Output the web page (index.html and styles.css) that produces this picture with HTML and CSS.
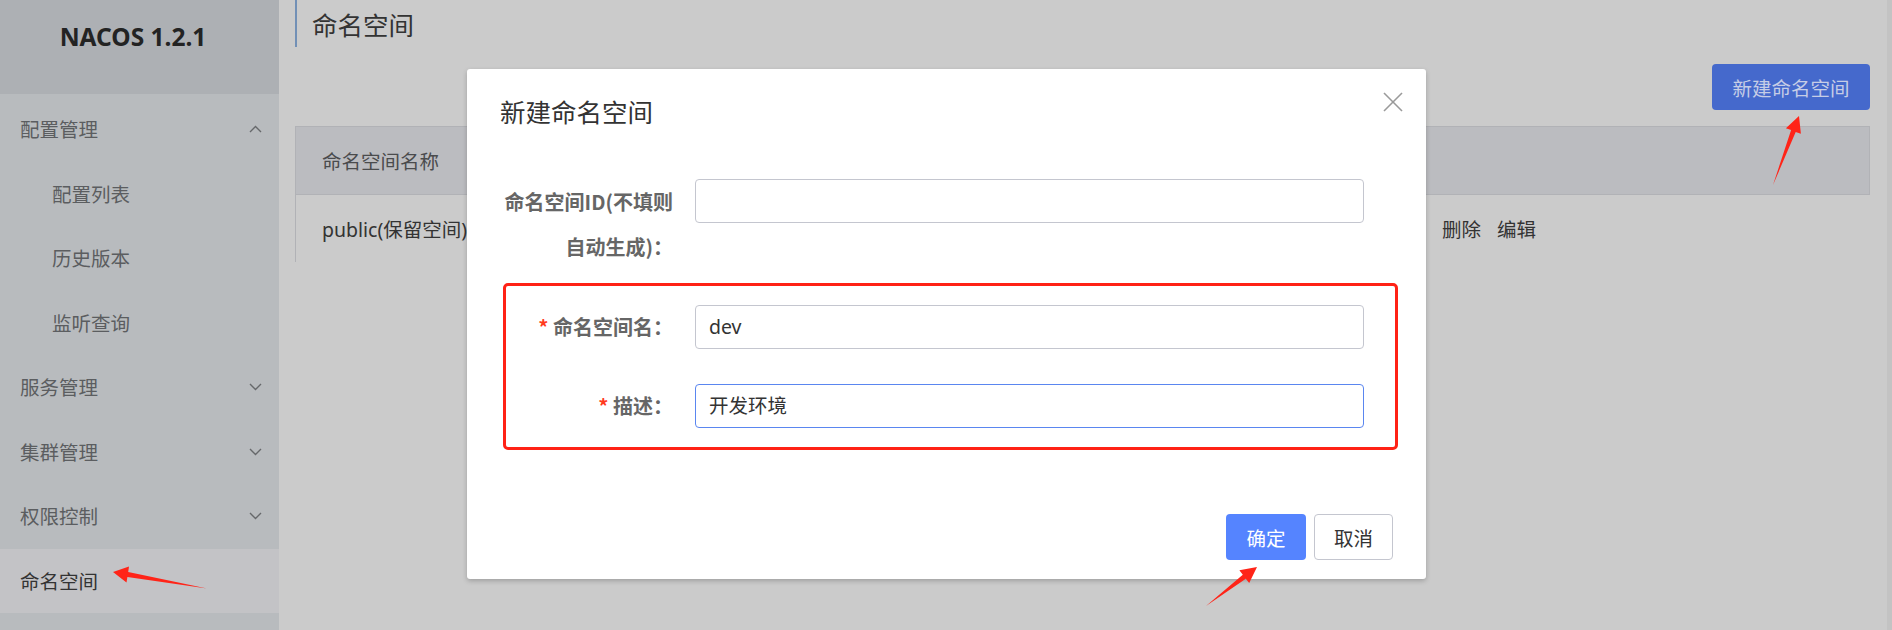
FILE: index.html
```html
<!DOCTYPE html>
<html lang="zh-CN">
<head>
<meta charset="utf-8">
<title>NACOS 1.2.1 - 命名空间</title>
<link rel="stylesheet" href="styles.css">
</head>
<body>
<div class="app">
  <aside class="sidebar">
    <div class="brand">NACOS 1.2.1</div>
    <nav class="menu">
      <div class="menu-item">配置管理<svg class="chev" width="13" height="8" viewBox="0 0 13 8"><polyline points="1,7 6.5,1.5 12,7"/></svg></div>
      <div class="menu-item sub">配置列表</div>
      <div class="menu-item sub">历史版本</div>
      <div class="menu-item sub">监听查询</div>
      <div class="menu-item">服务管理<svg class="chev" width="13" height="8" viewBox="0 0 13 8"><polyline points="1,1 6.5,6.5 12,1"/></svg></div>
      <div class="menu-item">集群管理<svg class="chev" width="13" height="8" viewBox="0 0 13 8"><polyline points="1,1 6.5,6.5 12,1"/></svg></div>
      <div class="menu-item">权限控制<svg class="chev" width="13" height="8" viewBox="0 0 13 8"><polyline points="1,1 6.5,6.5 12,1"/></svg></div>
      <div class="menu-item active">命名空间</div>
    </nav>
  </aside>
  <main class="main">
    <h1 class="page-title">命名空间</h1>
    <div class="toolbar"><button class="btn btn-new">新建命名空间</button></div>
    <div class="table">
      <div class="thead"><div class="cell">命名空间名称</div></div>
      <div class="trow">
        <div class="cell">public(保留空间)</div>
        <div class="cell actions"><span>删除</span><span>编辑</span></div>
      </div>
    </div>
  </main>
  <div class="scrollbar"></div>
</div>

<div class="dialog">
  <div class="dialog-header">
    <div class="dialog-title">新建命名空间</div>
    <svg class="dialog-close" width="20" height="20" viewBox="0 0 20 20"><line x1="1" y1="1" x2="19" y2="19"/><line x1="19" y1="1" x2="1" y2="19"/></svg>
  </div>
  <div class="form">
    <div class="form-item first">
      <label class="form-label two-line">命名空间ID(不填则<br>自动生成)：</label>
      <div class="input"></div>
    </div>
    <div class="form-item second">
      <label class="form-label"><span class="req">*</span> 命名空间名：</label>
      <div class="input">dev</div>
    </div>
    <div class="form-item third">
      <label class="form-label"><span class="req">*</span> 描述：</label>
      <div class="input focus">开发环境</div>
    </div>
  </div>
  <div class="dialog-footer">
    <button class="btn btn-primary">确定</button>
    <button class="btn btn-normal">取消</button>
  </div>
  <div class="highlight"></div>
</div>

<svg class="annotations" width="1892" height="630" viewBox="0 0 1892 630">
  <polygon points="113,572 129,566.6 128.2,572 207,588.5 127.4,577 126.5,582.4"/>
  <polygon points="1799,116 1800.9,133.8 1795.7,131.9 1773,185 1791.1,130.1 1785.9,128.2"/>
  <polygon points="1257,567 1249.2,583.1 1245.8,578.7 1206,606 1242.8,574.7 1239.4,570.3"/>
</svg>
</body>
</html>
```

FILE: styles.css
```css
* { box-sizing: border-box; }

html, body {
  margin: 0;
  padding: 0;
}

body {
  position: relative;
  width: 1892px;
  height: 630px;
  overflow: hidden;
  background: #cbcbcb;
  font-family: "Noto Sans", "Noto Sans CJK SC", sans-serif;
  font-size: 19.5px;
  color: #333;
}

.app {
  display: flex;
  height: 630px;
}

/* Sidebar */
.sidebar {
  width: 279px;
  flex: none;
  background: #b8bbbe;
  display: flex;
  flex-direction: column;
}

.brand {
  height: 94px;
  background: #adb0b4;
  padding: 21px 13px 0 0;
  text-align: center;
  font-family: "Noto Sans", sans-serif;
  font-weight: 700;
  font-size: 24.5px;
  line-height: 32px;
  color: #232323;
}

.menu {
  padding-top: 3px;
}

.menu-item {
  height: 64.5px;
  display: flex;
  align-items: center;
  justify-content: space-between;
  padding: 0 17px 0 20px;
  font-family: "Noto Sans CJK SC", sans-serif;
  font-size: 19.5px;
  line-height: 28px;
  color: #5b5d60;
}

.menu-item.sub {
  padding-left: 52px;
}

.menu-item.active {
  background: #c3c3c6;
  color: #333;
}

.chev {
  fill: none;
  stroke: #66686b;
  stroke-width: 1.4;
}

/* Main */
.main {
  flex: 1;
  padding: 0 17px 0 16px;
  display: flex;
  flex-direction: column;
}

.page-title {
  margin: 0;
  height: 47px;
  border-left: 2px solid #7290b6;
  padding: 6px 0 0 15px;
  font-family: "Noto Sans CJK SC", sans-serif;
  font-weight: 400;
  font-size: 25.5px;
  line-height: 36px;
  color: #333;
}

.toolbar {
  display: flex;
  justify-content: flex-end;
  margin-top: 17px;
}

.btn {
  border: none;
  border-radius: 4px;
  font-family: "Noto Sans CJK SC", sans-serif;
  font-size: 19.5px;
  padding: 0;
  height: 46px;
  cursor: pointer;
}

.btn-new {
  width: 158px;
  background: #4569cc;
  color: #c6cde6;
}

.table {
  margin-top: 16px;
}

.thead {
  height: 69px;
  background: #bbbcc0;
  border: 1px solid #b1b2b6;
  display: flex;
  align-items: center;
}

.cell {
  padding-left: 26px;
  font-family: "Noto Sans", "Noto Sans CJK SC", sans-serif;
}

.thead .cell {
  color: #4a4b4d;
  font-family: "Noto Sans CJK SC", sans-serif;
}

.trow {
  height: 67px;
  border-left: 1px solid #b1b2b6;
  display: grid;
  grid-template-columns: 1fr 454px;
  align-items: center;
  color: #333;
}

.actions {
  display: flex;
  gap: 16px;
  font-family: "Noto Sans CJK SC", sans-serif;
}

.scrollbar {
  width: 5px;
  flex: none;
  background: #c3c3c3;
}

/* Dialog */
.dialog {
  position: absolute;
  left: 467px;
  top: 69px;
  width: 959px;
  height: 510px;
  background: #fff;
  border-radius: 3px;
  box-shadow: 0 2px 5px rgba(0, 0, 0, 0.22);
  display: flex;
  flex-direction: column;
}

.dialog-header {
  display: flex;
  justify-content: space-between;
  align-items: flex-start;
  padding: 23px 23px 0 33px;
}

.dialog-title {
  font-family: "Noto Sans CJK SC", sans-serif;
  font-size: 25.5px;
  line-height: 38px;
  color: #333;
}

.dialog-close {
  stroke: #9a9a9a;
  stroke-width: 1.6;
}

.form {
  padding-top: 49px;
  display: flex;
  flex-direction: column;
}

.form-item {
  display: flex;
  align-items: center;
}

.form-item.first {
  align-items: flex-start;
}

.form-item.second {
  margin-top: 36px;
}

.form-item.third {
  margin-top: 35px;
}

.form-label {
  width: 208px;
  padding-right: 2px;
  text-align: right;
  font-family: "Noto Sans CJK SC", sans-serif;
  font-weight: 700;
  font-size: 20px;
  line-height: 44px;
  color: #666;
}

.two-line {
  line-height: 45px;
}

.req {
  color: #ff3b1f;
}

.input {
  margin-left: 20px;
  width: 669px;
  height: 44px;
  border: 1px solid #c4c6cf;
  border-radius: 4px;
  padding: 0 13px;
  font-family: "Noto Sans", "Noto Sans CJK SC", sans-serif;
  font-size: 19.5px;
  line-height: 42px;
  color: #333;
}

.input.focus {
  border-color: #5a86f0;
}

.dialog-footer {
  margin-top: auto;
  display: flex;
  justify-content: flex-end;
  gap: 8px;
  padding: 0 33px 19px 0;
}

.btn-primary {
  width: 80px;
  background: #5584ff;
  color: #fff;
}

.btn-normal {
  width: 79px;
  background: #fff;
  border: 1px solid #c4c6cf;
  color: #333;
}

.highlight {
  position: absolute;
  left: 36px;
  top: 214px;
  width: 895px;
  height: 167px;
  border: 3px solid #ff2216;
  border-radius: 5px;
}

/* Annotation arrows */
.annotations {
  position: absolute;
  left: 0;
  top: 0;
  pointer-events: none;
  fill: #ff2418;
}
```
